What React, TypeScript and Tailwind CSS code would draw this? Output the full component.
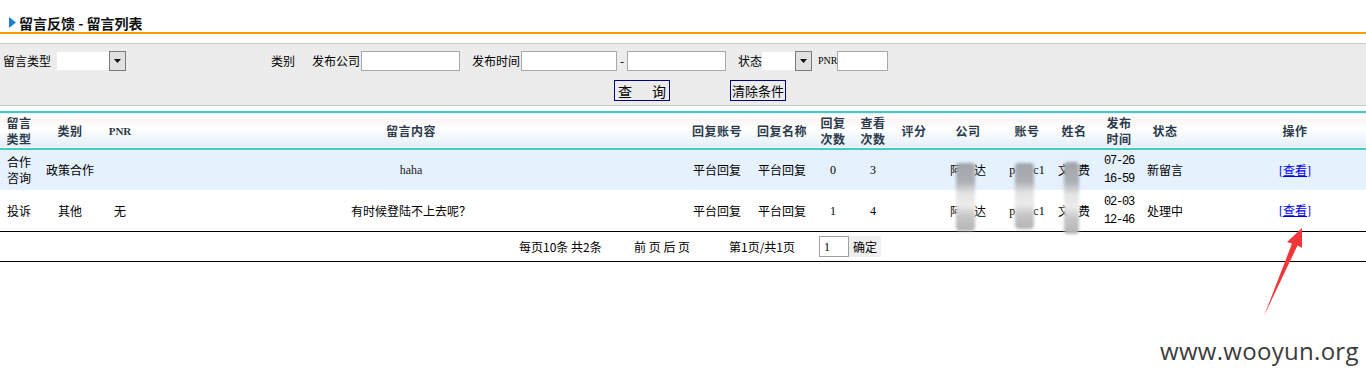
import React from 'react';

const cjk = "font-['Noto_Sans_CJK_SC','Liberation_Sans',sans-serif]";
const serif = "font-['Liberation_Serif','Noto_Sans_CJK_SC',serif]";

function DropBox({ white }: { white: string }) {
  return (
    <div className="flex items-center">
      <div className={white} />
      <div className="flex h-[20px] w-[17px] items-center justify-center border border-[#7a7a7a] bg-[#e1e1e1]">
        <svg width="7" height="4" viewBox="0 0 7 4">
          <path d="M0 0 L7 0 L3.5 4 Z" fill="#111" />
        </svg>
      </div>
    </div>
  );
}

function Field({ w }: { w: string }) {
  return <div className={`h-[20px] border border-[#a9a9a9] bg-white ${w}`} />;
}

function Blob({ pos }: { pos: string }) {
  return (
    <div
      className={`absolute rounded-[4px] blur-[1.5px] bg-[linear-gradient(to_bottom,#a1a5ab_0%,#acb0b5_28%,#e4e4e4_45%,#ececec_62%,#c6c6c6_78%,#b4b4b4_100%)] ${pos}`}
    />
  );
}

function Two({ a, b }: { a: string; b: string }) {
  return (
    <>
      <div className="h-[16px]">{a}</div>
      <div className="h-[16px]">{b}</div>
    </>
  );
}

const rows = [
  {
    type: ['合作', '咨询'],
    cat: '政策合作',
    pnr: '',
    content: 'haha',
    serifContent: true,
    replies: '0',
    views: '3',
    time: ['07-26', '16-59'],
    state: '新留言',
    bg: 'bg-[#e5f1fd]',
  },
  {
    type: ['投诉'],
    cat: '其他',
    pnr: '无',
    content: '有时候登陆不上去呢？',
    serifContent: false,
    replies: '1',
    views: '4',
    time: ['02-03', '12-46'],
    state: '处理中',
    bg: 'bg-white',
  },
];

export default function App() {
  return (
    <div className={`relative h-[381px] w-[1366px] overflow-hidden bg-white text-[12px] text-black ${cjk}`}>
      {/* title */}
      <div className="flex h-[32px] items-start pl-[9px] pt-[15px]">
        <svg width="7" height="11" viewBox="0 0 7 11" className="mt-[2px]">
          <path d="M0 0 L7 5.5 L0 11 Z" fill="#1a80d4" />
        </svg>
        <span className="ml-[3px] text-[14px] font-bold leading-[17px] text-[#111]">留言反馈 - 留言列表</span>
      </div>
      <div className="h-[2px] bg-[#ff9900]" />
      <div className="h-[9px]" />

      {/* search form */}
      <div className="h-[63px] border-y border-[#c9c9c9] bg-[#ececec]">
        <div className="mt-[7px] flex h-[20px] items-center pl-[3px] leading-[20px]">
          <span className="w-[54px]">留言类型</span>
          <DropBox white="h-[18px] w-[52px] bg-white" />
          <span className="ml-[145px] w-[41px]">类别</span>
          <span className="w-[49px]">发布公司</span>
          <Field w="w-[99px]" />
          <span className="ml-[12px] w-[49px]">发布时间</span>
          <Field w="w-[96px]" />
          <span className="w-[10px] text-center">-</span>
          <Field w="w-[99px]" />
          <span className="ml-[12px] w-[24px]">状态</span>
          <DropBox white="h-[18px] w-[33px] bg-white" />
          <span className={`ml-[6px] w-[19px] text-[10px] ${serif}`}>PNR</span>
          <Field w="w-[51px]" />
        </div>
        <div className="mt-[9px] flex h-[21px] items-center">
          <div className="ml-[614px] flex h-[21px] w-[56px] items-center justify-between border border-[#000080] px-[3px] text-[14px] leading-[18px]">
            <span>查</span>
            <span>询</span>
          </div>
          <div className="ml-[60px] flex h-[21px] w-[56px] items-center justify-center border border-[#000080] text-[13px] leading-[18px]">
            清除条件
          </div>
        </div>
      </div>
      <div className="h-[5px]" />

      {/* list */}
      <table className="w-full table-fixed border-collapse">
        <colgroup>
          <col className="w-[38px]" />
          <col className="w-[64px]" />
          <col className="w-[36px]" />
          <col className="w-[546px]" />
          <col className="w-[66px]" />
          <col className="w-[64px]" />
          <col className="w-[38px]" />
          <col className="w-[42px]" />
          <col className="w-[40px]" />
          <col className="w-[68px]" />
          <col className="w-[50px]" />
          <col className="w-[44px]" />
          <col className="w-[46px]" />
          <col className="w-[46px]" />
          <col />
        </colgroup>
        <thead>
          <tr className="h-[37px] border-y-2 border-[#45cbc2] bg-[linear-gradient(to_bottom,#ffffff_0%,#fcf6f6_18%,#ffffff_45%,#eef5fb_80%,#e3eef8_100%)] text-[12px] font-bold leading-[16px] tracking-[0.5px] text-[#2b3a4a]">
            <th className="p-0 font-bold"><Two a="留言" b="类型" /></th>
            <th className="p-0 font-bold">类别</th>
            <th className={`p-0 text-[11px] font-bold tracking-normal ${serif}`}>PNR</th>
            <th className="p-0 font-bold">留言内容</th>
            <th className="p-0 font-bold">回复账号</th>
            <th className="p-0 font-bold">回复名称</th>
            <th className="p-0 font-bold"><Two a="回复" b="次数" /></th>
            <th className="p-0 font-bold"><Two a="查看" b="次数" /></th>
            <th className="p-0 font-bold">评分</th>
            <th className="p-0 font-bold">公司</th>
            <th className="p-0 font-bold">账号</th>
            <th className="p-0 font-bold">姓名</th>
            <th className="p-0 font-bold"><Two a="发布" b="时间" /></th>
            <th className="p-0 font-bold">状态</th>
            <th className="p-0 pl-[36px] font-bold">操作</th>
          </tr>
        </thead>
        <tbody className="text-center leading-[16px]">
          {rows.map((r, i) => (
            <tr key={i} className={`h-[41px] ${r.bg}`}>
              <td className="p-0">
                {r.type.map((t, j) => (
                  <div key={j}>{t}</div>
                ))}
              </td>
              <td className="p-0">{r.cat}</td>
              <td className="p-0">{r.pnr}</td>
              <td className={`p-0 ${r.serifContent ? `${serif} text-[#222]` : ''}`}>{r.content}</td>
              <td className="p-0">平台回复</td>
              <td className="p-0">平台回复</td>
              <td className={`p-0 ${serif}`}>{r.replies}</td>
              <td className={`p-0 ${serif}`}>{r.views}</td>
              <td className="p-0" />
              <td className="p-0">
                阿<span className="inline-block w-[12px]" />达
              </td>
              <td className={`p-0 ${serif}`}>
                p<span className="inline-block w-[18px]" />c1
              </td>
              <td className="p-0">
                文<span className="inline-block w-[8px]" />费
              </td>
              <td className="p-0 font-['Liberation_Mono',monospace] text-[12px] leading-[18px] tracking-[-1.2px]">
                <div>{r.time[0]}</div>
                <div>{r.time[1]}</div>
              </td>
              <td className="p-0">{r.state}</td>
              <td className="p-0 pl-[36px]">
                <span className="text-[#0000ee] underline">
                  <span className={serif}>[</span>查看<span className={serif}>]</span>
                </span>
              </td>
            </tr>
          ))}
        </tbody>
      </table>

      {/* pager */}
      <div className="flex h-[31px] items-center border-y border-black pl-[519px] leading-[20px]">
        <span className="w-[115px]">每页10条 共2条</span>
        <span className="w-[95px]">前 页 后 页</span>
        <span className="w-[90px]">第1页/共1页</span>
        <div className="flex h-[21px] w-[30px] items-center border border-[#a0a0a0] bg-white pl-[4px]">
          <span className={serif}>1</span>
        </div>
        <span className="flex h-[21px] items-center bg-[#efefef] px-[4px]">确定</span>
      </div>

      {/* blurred private data */}
      <Blob pos="left-[956px] top-[163px] h-[68px] w-[19px]" />
      <Blob pos="left-[1015px] top-[163px] h-[66px] w-[19px]" />
      <Blob pos="left-[1064px] top-[162px] h-[72px] w-[15px]" />

      {/* annotation arrow */}
      <svg className="pointer-events-none absolute left-0 top-0" width="1366" height="381" viewBox="0 0 1366 381">
        <polygon
          points="1302,228 1302,248 1297.5,245.5 1264,316 1292,243.5 1287,242"
          fill="#f0383a"
        />
      </svg>

      {/* watermark */}
      <div className="absolute left-[1160px] top-[336px] font-['Open_Sans',sans-serif] text-[24px] leading-[30px] tracking-[0.3px] text-[#3c3c3c]">
        www.wooyun.org
      </div>
    </div>
  );
}
